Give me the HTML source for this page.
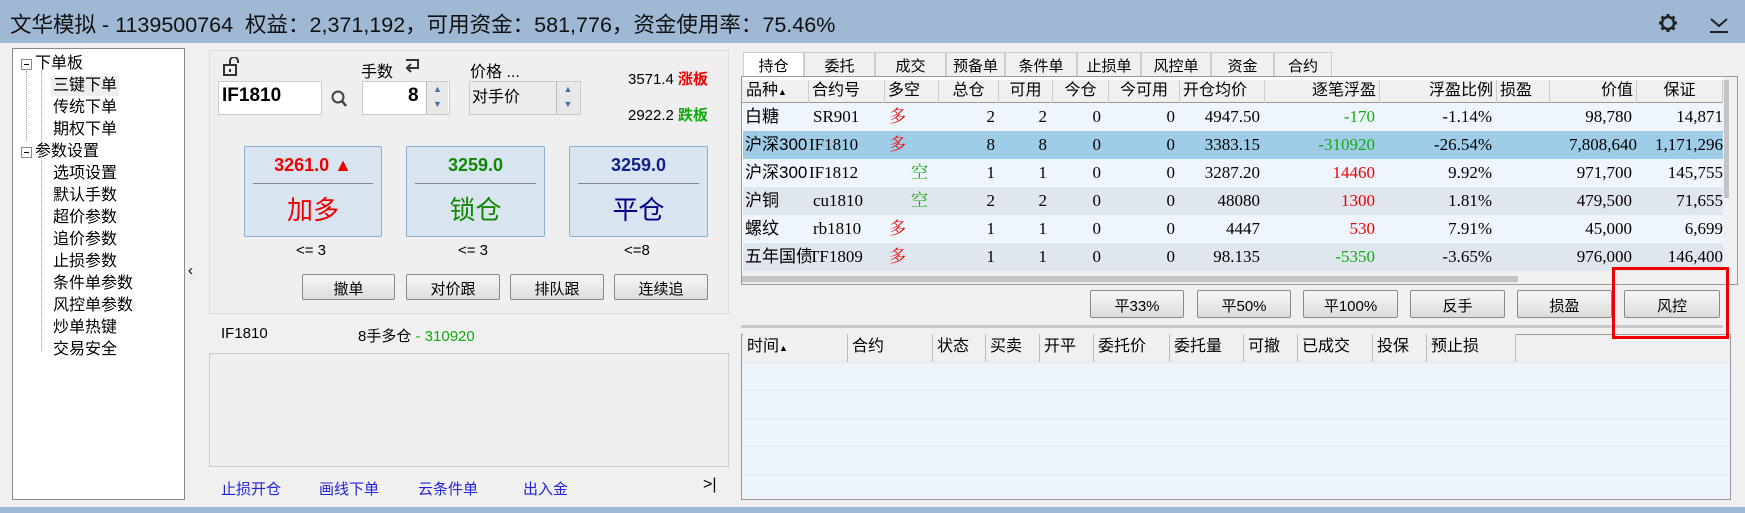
<!DOCTYPE html>
<html><head><meta charset="utf-8"><style>
*{box-sizing:border-box;margin:0;padding:0}
body{width:1745px;height:513px;background:#9fb8d3;position:relative;overflow:hidden;font-family:"Liberation Sans","Noto Sans CJK SC",sans-serif;font-size:15px;color:#000}
.a{position:absolute;white-space:nowrap}
.title{left:10px;top:8px;font-size:21.5px;color:#111}
.main{left:0;top:43px;width:1745px;height:464px;background:#f0f0f0}
.tree{left:12px;top:48px;width:173px;height:452px;background:#fff;border:1px solid #888}
.ti{position:absolute;font-size:16px;left:40px;line-height:20px}
.tb{position:absolute;width:11px;height:11px;border:1px solid #888;background:#fff;left:8px}
.tb:after{content:"";position:absolute;left:2px;top:4px;width:5px;height:1px;background:#000}
.panel{left:209px;top:50px;width:520px;height:264px;background:#efefef;border:1px solid #ddd}
.inp{background:#fff;border:1px solid #ccc}
.big{position:absolute;top:146px;height:91px;background:#d9e4f1;border:1px solid #8fb0d6;border-radius:2px;text-align:center}
.big .p{font-size:18px;font-weight:bold;margin-top:8px;height:24px}
.big .l{border-top:1px solid #888;margin:4px 8px 0;padding-top:6px;font-size:26px}
.btn{position:absolute;background:linear-gradient(#f7f7f7,#dcdcdc);border:1px solid #8a8a8a;border-radius:2px;text-align:center;font-size:15px}
.tab{position:absolute;top:52px;height:24px;border:1px solid #ccc;border-bottom:none;text-align:center;font-size:15px;padding-top:2px;background:#f0f0f0}
.th{position:absolute;top:80px;height:23px;font-size:16px;line-height:22px;border-right:1px solid #ccc;padding:0 3px}
.row{position:absolute;left:743px;width:980px;height:28px}
.c{position:absolute;font-family:"Liberation Serif","Noto Serif CJK SC",serif;font-size:17px;top:3px;line-height:22px;height:22px;white-space:nowrap;overflow:hidden}
.r{color:#e00}.g{color:#1a1}
.bh{position:absolute;top:334px;height:28px;font-size:16px;line-height:26px;border-right:1px solid #bbb;padding:0 4px;background:#f0f0f0}
</style></head><body>
<div class="a title">文华模拟 - 1139500764 &nbsp;权益：2,371,192，可用资金：581,776，资金使用率：75.46%</div>
<svg class="a" style="left:1657px;top:12px" width="22" height="22" viewBox="0 0 22 22"><circle cx="11" cy="11" r="6" fill="none" stroke="#222" stroke-width="2.5"/><g stroke="#222" stroke-width="3"><line x1="11" y1="2" x2="11" y2="5"/><line x1="11" y1="17" x2="11" y2="20"/><line x1="2" y1="11" x2="5" y2="11"/><line x1="17" y1="11" x2="20" y2="11"/><line x1="4.6" y1="4.6" x2="6.7" y2="6.7"/><line x1="15.3" y1="15.3" x2="17.4" y2="17.4"/><line x1="4.6" y1="17.4" x2="6.7" y2="15.3"/><line x1="15.3" y1="6.7" x2="17.4" y2="4.6"/></g></svg>
<svg class="a" style="left:1708px;top:13px" width="22" height="22"><path d="M3 6 L11 13 L19 6" fill="none" stroke="#222" stroke-width="2"/><line x1="2" y1="19" x2="20" y2="19" stroke="#222" stroke-width="2"/></svg>
<div class="a main"></div>
<div class="a tree">
<div class="tb" style="top:10px"></div><div class="ti" style="left:22px;top:5px">下单板</div>
<div class="ti" style="top:27px;background:#eee;padding:0 2px;left:38px">三键下单</div>
<div class="ti" style="top:49px">传统下单</div>
<div class="ti" style="top:71px">期权下单</div>
<div class="tb" style="top:98px"></div><div class="ti" style="left:22px;top:93px">参数设置</div>
<div class="ti" style="top:115px">选项设置</div>
<div class="ti" style="top:137px">默认手数</div>
<div class="ti" style="top:159px">超价参数</div>
<div class="ti" style="top:181px">追价参数</div>
<div class="ti" style="top:203px">止损参数</div>
<div class="ti" style="top:225px">条件单参数</div>
<div class="ti" style="top:247px">风控单参数</div>
<div class="ti" style="top:269px">炒单热键</div>
<div class="ti" style="top:291px">交易安全</div>
<div style="position:absolute;left:13px;top:22px;height:70px;border-left:1px dotted #999"></div>
<div style="position:absolute;left:28px;top:22px;height:280px;border-left:1px dotted #999"></div>
</div>
<div class="a" style="left:188px;top:262px;font-size:15px">‹</div>
<div class="a panel"></div>
<svg class="a" style="left:222px;top:57px" width="18" height="20"><rect x="2" y="8" width="12" height="10" fill="none" stroke="#333" stroke-width="2"/><path d="M8 8 V4 a4 4 0 0 1 8 0 V6" fill="none" stroke="#333" stroke-width="2"/><rect x="7" y="12" width="2" height="3" fill="#333"/></svg>
<div class="a inp" style="left:218px;top:81px;width:104px;height:34px"></div>
<div class="a" style="left:222px;top:85px;font-size:19px;font-weight:bold">IF1810</div>
<svg class="a" style="left:330px;top:89px" width="18" height="20"><circle cx="8" cy="8" r="5.5" fill="none" stroke="#444" stroke-width="2"/><line x1="12" y1="12" x2="16" y2="17" stroke="#444" stroke-width="2.5"/></svg>
<div class="a" style="left:361px;top:58px;font-size:16px">手数</div>
<svg class="a" style="left:403px;top:58px" width="18" height="16"><path d="M3 2 H15 V10 H6" fill="none" stroke="#333" stroke-width="2"/><path d="M8 6 L4 10 L8 14" fill="none" stroke="#333" stroke-width="2"/></svg>
<div class="a inp" style="left:362px;top:81px;width:88px;height:34px"></div>
<div class="a" style="left:408px;top:85px;font-size:19px;font-weight:bold">8</div>
<div class="a" style="left:426px;top:82px;width:22px;height:32px;background:#e8e8e8;border-left:1px solid #bbb;font-size:9px;color:#4070b0;text-align:center;line-height:15px">▲<br>▼</div>
<div class="a" style="left:470px;top:58px;font-size:16px">价格 ...</div>
<div class="a" style="left:469px;top:81px;width:112px;height:34px;background:#ececec;border:1px solid #ccc"></div>
<div class="a" style="left:472px;top:83px;font-size:16px">对手价</div>
<div class="a" style="left:556px;top:82px;width:23px;height:32px;background:#e8e8e8;border-left:1px solid #bbb;font-size:9px;color:#4070b0;text-align:center;line-height:15px">▲<br>▼</div>
<div class="a" style="left:628px;top:68px;font-size:15px">3571.4 <b class="r">涨板</b></div>
<div class="a" style="left:628px;top:104px;font-size:15px">2922.2 <b class="g">跌板</b></div>
<div class="big" style="left:244px;width:138px"><div class="p r">3261.0 ▲</div><div class="l r">加多</div></div>
<div class="big" style="left:406px;width:139px"><div class="p" style="color:#180">3259.0</div><div class="l" style="color:#180">锁仓</div></div>
<div class="big" style="left:569px;width:139px"><div class="p" style="color:#128">3259.0</div><div class="l" style="color:#008">平仓</div></div>
<div class="a" style="left:296px;top:242px">&lt;= 3</div>
<div class="a" style="left:458px;top:242px">&lt;= 3</div>
<div class="a" style="left:624px;top:242px">&lt;=8</div>
<div class="btn" style="left:302px;top:274px;width:93px;height:26px;padding-top:3px">撤单</div>
<div class="btn" style="left:406px;top:274px;width:94px;height:26px;padding-top:3px">对价跟</div>
<div class="btn" style="left:510px;top:274px;width:94px;height:26px;padding-top:3px">排队跟</div>
<div class="btn" style="left:614px;top:274px;width:94px;height:26px;padding-top:3px">连续追</div>
<div class="a" style="left:221px;top:325px">IF1810</div>
<div class="a" style="left:358px;top:325px">8手多仓 <span class="g">- 310920</span></div>
<div class="a" style="left:209px;top:353px;width:520px;height:114px;border:1px solid #ccc;background:#efefef"></div>
<div class="a" style="left:221px;top:478px;color:#22d">止损开仓</div>
<div class="a" style="left:319px;top:478px;color:#22d">画线下单</div>
<div class="a" style="left:418px;top:478px;color:#22d">云条件单</div>
<div class="a" style="left:523px;top:478px;color:#22d">出入金</div>
<div class="a" style="left:703px;top:476px;font-size:16px">&gt;|</div>

<div class="tab" style="left:743px;width:61px;background:#fff">持仓</div>
<div class="tab" style="left:804px;width:71px">委托</div>
<div class="tab" style="left:875px;width:71px">成交</div>
<div class="tab" style="left:946px;width:59px">预备单</div>
<div class="tab" style="left:1005px;width:72px">条件单</div>
<div class="tab" style="left:1077px;width:64px">止损单</div>
<div class="tab" style="left:1141px;width:70px">风控单</div>
<div class="tab" style="left:1211px;width:63px">资金</div>
<div class="tab" style="left:1274px;width:58px">合约</div>
<div class="a" style="left:741px;top:76px;width:997px;height:209px;border:1px solid #999;background:#fff"></div>
<div class="a" style="left:742px;top:80px;width:981px;height:23px;background:#f0f0f0;border-bottom:1px solid #999"></div>
<div class="th" style="left:743px;width:66px">品种<span style="font-size:9px">▲</span></div>
<div class="th" style="left:809px;width:76px">合约号</div>
<div class="th" style="left:885px;width:54px">多空</div>
<div class="th" style="left:939px;width:60px;text-align:center">总仓</div>
<div class="th" style="left:999px;width:54px;text-align:center">可用</div>
<div class="th" style="left:1053px;width:56px;text-align:center">今仓</div>
<div class="th" style="left:1109px;width:71px;text-align:center">今可用</div>
<div class="th" style="left:1180px;width:85px">开仓均价</div>
<div class="th" style="left:1265px;width:115px;text-align:right">逐笔浮盈</div>
<div class="th" style="left:1380px;width:117px;text-align:right">浮盈比例</div>
<div class="th" style="left:1497px;width:53px">损盈</div>
<div class="th" style="left:1550px;width:87px;text-align:right">价值</div>
<div class="th" style="left:1637px;width:86px;text-align:center">保证</div>

<div class="row" style="top:103px;background:#eef5fc">
<span class="c" style="left:2px;font-family:'Liberation Sans','Noto Sans CJK SC',sans-serif">白糖</span><span class="c" style="left:70px">SR901</span><span class="c r" style="left:146px">多</span>
<span class="c" style="right:728px">2</span><span class="c" style="right:676px">2</span><span class="c" style="right:622px">0</span><span class="c" style="right:548px">0</span><span class="c" style="right:463px">4947.50</span><span class="c g" style="right:348px">-170</span><span class="c" style="right:231px">-1.14%</span><span class="c" style="right:91px">98,780</span><span class="c" style="right:0">14,871</span></div>
<div class="row" style="top:131px;background:#9fcde7">
<span class="c" style="left:2px;width:66px;font-family:'Liberation Sans','Noto Sans CJK SC',sans-serif">沪深300</span><span class="c" style="left:66px">IF1810</span><span class="c r" style="left:146px">多</span>
<span class="c" style="right:728px">8</span><span class="c" style="right:676px">8</span><span class="c" style="right:622px">0</span><span class="c" style="right:548px">0</span><span class="c" style="right:463px">3383.15</span><span class="c g" style="right:348px">-310920</span><span class="c" style="right:231px">-26.54%</span><span class="c" style="right:86px">7,808,640</span><span class="c" style="right:0">1,171,296</span></div>
<div class="row" style="top:159px;background:#eef5fc">
<span class="c" style="left:2px;width:66px;font-family:'Liberation Sans','Noto Sans CJK SC',sans-serif">沪深300</span><span class="c" style="left:66px">IF1812</span><span class="c g" style="left:168px">空</span>
<span class="c" style="right:728px">1</span><span class="c" style="right:676px">1</span><span class="c" style="right:622px">0</span><span class="c" style="right:548px">0</span><span class="c" style="right:463px">3287.20</span><span class="c r" style="right:348px">14460</span><span class="c" style="right:231px">9.92%</span><span class="c" style="right:91px">971,700</span><span class="c" style="right:0">145,755</span></div>
<div class="row" style="top:187px;background:#dfe6ee">
<span class="c" style="left:2px;font-family:'Liberation Sans','Noto Sans CJK SC',sans-serif">沪铜</span><span class="c" style="left:70px">cu1810</span><span class="c g" style="left:168px">空</span>
<span class="c" style="right:728px">2</span><span class="c" style="right:676px">2</span><span class="c" style="right:622px">0</span><span class="c" style="right:548px">0</span><span class="c" style="right:463px">48080</span><span class="c r" style="right:348px">1300</span><span class="c" style="right:231px">1.81%</span><span class="c" style="right:91px">479,500</span><span class="c" style="right:0">71,655</span></div>
<div class="row" style="top:215px;background:#eef5fc">
<span class="c" style="left:2px;font-family:'Liberation Sans','Noto Sans CJK SC',sans-serif">螺纹</span><span class="c" style="left:70px">rb1810</span><span class="c r" style="left:146px">多</span>
<span class="c" style="right:728px">1</span><span class="c" style="right:676px">1</span><span class="c" style="right:622px">0</span><span class="c" style="right:548px">0</span><span class="c" style="right:463px">4447</span><span class="c r" style="right:348px">530</span><span class="c" style="right:231px">7.91%</span><span class="c" style="right:91px">45,000</span><span class="c" style="right:0">6,699</span></div>
<div class="row" style="top:243px;background:#dfe6ee">
<span class="c" style="left:2px;width:66px;font-family:'Liberation Sans','Noto Sans CJK SC',sans-serif">五年国债</span><span class="c" style="left:66px">TF1809</span><span class="c r" style="left:146px">多</span>
<span class="c" style="right:728px">1</span><span class="c" style="right:676px">1</span><span class="c" style="right:622px">0</span><span class="c" style="right:548px">0</span><span class="c" style="right:463px">98.135</span><span class="c g" style="right:348px">-5350</span><span class="c" style="right:231px">-3.65%</span><span class="c" style="right:91px">976,000</span><span class="c" style="right:0">146,400</span></div>
<div class="a" style="left:742px;top:271px;width:981px;height:13px;background:#f0f0f0"></div>
<div class="a" style="left:742px;top:276px;width:776px;height:6px;background:#c4c4c4"></div>
<div class="a" style="left:1723px;top:77px;width:14px;height:207px;background:#f0f0f0"></div>
<div class="a" style="left:1724px;top:80px;width:5px;height:118px;background:#c4c4c4"></div>

<div class="btn" style="left:1090px;top:290px;width:94px;height:28px;padding-top:4px">平33%</div>
<div class="btn" style="left:1197px;top:290px;width:94px;height:28px;padding-top:4px">平50%</div>
<div class="btn" style="left:1303px;top:290px;width:95px;height:28px;padding-top:4px">平100%</div>
<div class="btn" style="left:1410px;top:290px;width:95px;height:28px;padding-top:4px">反手</div>
<div class="btn" style="left:1517px;top:290px;width:95px;height:28px;padding-top:4px">损盈</div>
<div class="btn" style="left:1624px;top:290px;width:96px;height:28px;padding-top:4px">风控</div>
<div class="a" style="left:741px;top:325px;width:982px;height:3px;background:#c8c8c8"></div>

<div class="a" style="left:741px;top:334px;width:990px;height:166px;border:1px solid #999;background:#eef4fb;background-image:repeating-linear-gradient(#eef4fb 0 27px,#e2e8ef 27px 28px)"></div>
<div class="a" style="left:742px;top:335px;width:988px;height:27px;background:#f0f0f0"></div>
<div class="bh" style="left:743px;width:105px">时间<span style="font-size:9px">▲</span></div>
<div class="bh" style="left:848px;width:85px">合约</div>
<div class="bh" style="left:933px;width:53px">状态</div>
<div class="bh" style="left:986px;width:54px">买卖</div>
<div class="bh" style="left:1040px;width:54px">开平</div>
<div class="bh" style="left:1094px;width:76px">委托价</div>
<div class="bh" style="left:1170px;width:74px">委托量</div>
<div class="bh" style="left:1244px;width:54px">可撤</div>
<div class="bh" style="left:1298px;width:75px">已成交</div>
<div class="bh" style="left:1373px;width:54px">投保</div>
<div class="bh" style="left:1427px;width:89px">预止损</div>
<div class="a" style="left:1612px;top:267px;width:117px;height:72px;border:3px solid #e00;z-index:10"></div>
</body></html>
